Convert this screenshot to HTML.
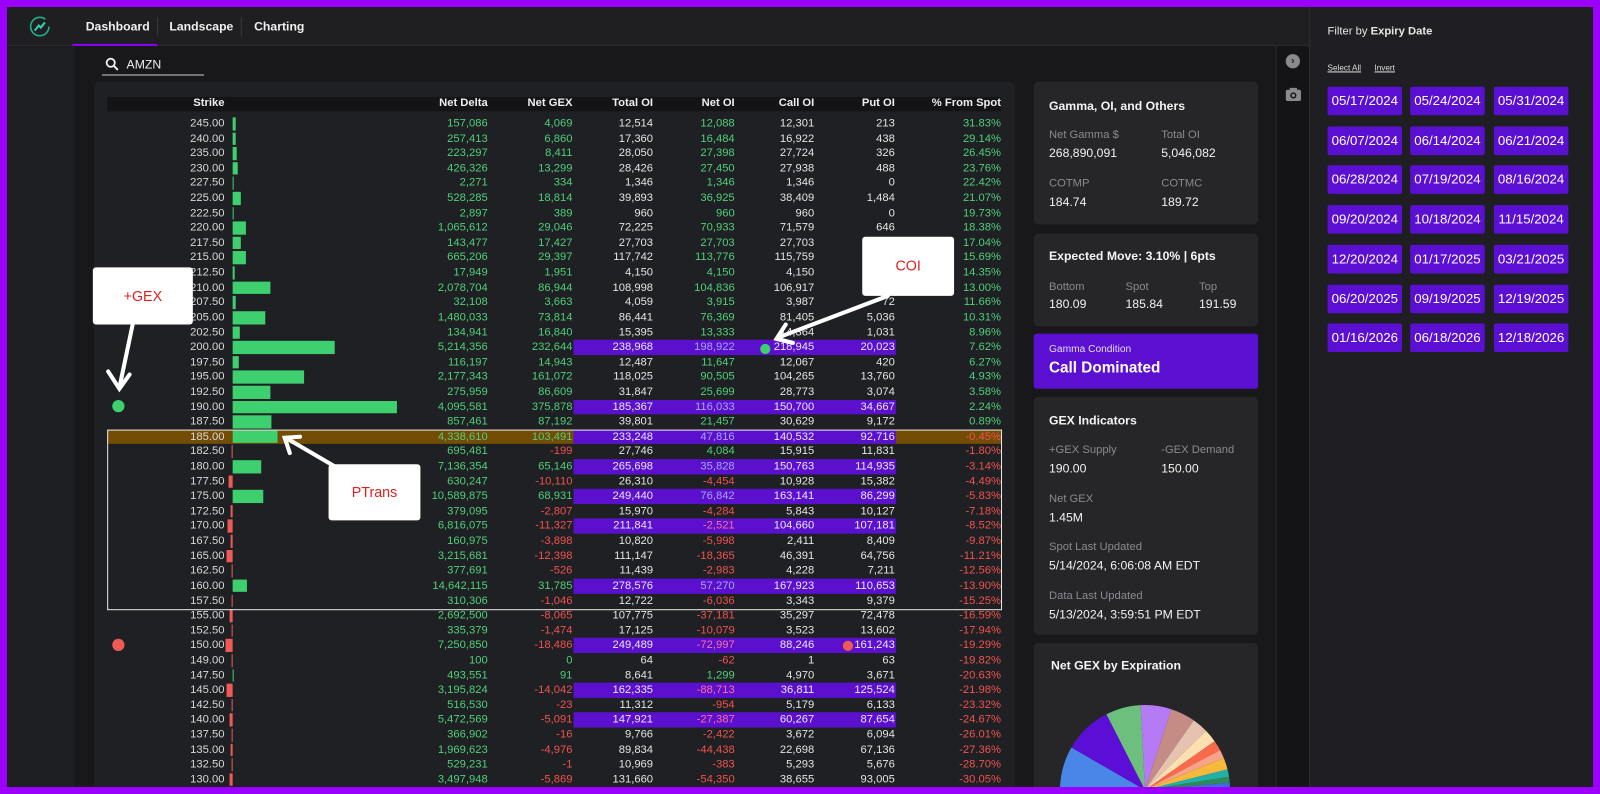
<!DOCTYPE html>
<html style="overflow:hidden;width:1600px;height:794px"><head><meta charset="utf-8"><style>
*{margin:0;padding:0;box-sizing:border-box}
body{width:1600px;height:794px;overflow:hidden;background:#1e1f22;font-family:"Liberation Sans",sans-serif;position:relative}
.a{position:absolute}
#s{position:absolute;left:0;top:0;width:1568px;height:778px;overflow:hidden;transform:scale(1.0204);transform-origin:0 0}
#app{position:absolute;left:7px;top:7px;width:1555px;height:771px;background:#1e1f22;overflow:hidden}
.hdr{left:0;top:0;width:1276px;height:38px;background:#1f1f22;border-bottom:1px solid #2c2c30}
.tab{top:12px;font-size:12px;font-weight:bold;color:#f0f0f0}
.r{position:relative;height:14.61px;font-size:11px;line-height:14.61px}
.r span{position:absolute;top:0;color:#e4e4e4;white-space:nowrap}
.r span:nth-of-type(1){right:1348px;color:#d8d8d8}
.r span:nth-of-type(2){right:1090px}
.r span:nth-of-type(3){right:1007px}
.r span:nth-of-type(4){right:928px}
.r span:nth-of-type(5){right:848px}
.r span:nth-of-type(6){right:770px}
.r span:nth-of-type(7){right:691px}
.r span:nth-of-type(8){right:587px}
.r span.g{color:#4fcf7a}.r span.n{color:#f0524f}
.r em{position:absolute;left:228px;top:1px;height:12.6px;background:#3ecf6e}
.r em.n{left:auto;right:1340px;background:#ee5a55}
.r.p::before{content:"";position:absolute;left:562px;width:316px;top:0;height:14.61px;background:#5a10cc}
.r.p span:nth-of-type(4),.r.p span:nth-of-type(6),.r.p span:nth-of-type(7){color:#ece6ff}
.r.p span:nth-of-type(5).g{color:#a9a4ff}.r.p span:nth-of-type(5).n{color:#ff6f9a}
.r.b::after{content:"";position:absolute;left:105px;width:876px;top:0;height:14.61px;background:rgba(130,85,0,.85);z-index:-1}
.card{position:absolute;left:1006px;width:220px;background:#262629;border-radius:5px}
.ct{position:absolute;left:15px;font-size:12px;font-weight:bold;color:#f4f4f4}
.lb{position:absolute;font-size:11px;color:#8a8a90}
.vl{position:absolute;font-size:12px;color:#f2f2f2}
.dt{position:absolute;width:73px;height:28px;background:#5b0fd3;color:#fff;font-size:13px;text-align:center;line-height:28px;border-radius:2px}
</style></head><body>
<div id="s">
<div id="app">
<div class="a" style="left:66px;top:38px;width:1177px;height:742px;background:#18181b"></div>
<div class="a hdr"></div>
<svg class="a" style="left:21px;top:8px" width="22" height="22" viewBox="0 0 22 22"><circle cx="11" cy="11" r="9" fill="none" stroke="#1fae8c" stroke-width="1.6" stroke-dasharray="48 9"/><path d="M6 15 L10 10 L12 12 L16 7" stroke="#2fd3b0" stroke-width="2" fill="none"/></svg>
<div class="a tab" style="left:77px">Dashboard</div>
<div class="a" style="left:147px;top:10px;width:1px;height:18px;background:#3a3a3e"></div>
<div class="a tab" style="left:159px">Landscape</div>
<div class="a" style="left:229px;top:10px;width:1px;height:18px;background:#3a3a3e"></div>
<div class="a tab" style="left:242px">Charting</div>
<div class="a" style="left:64px;top:36px;width:83px;height:2px;background:#8a00ff"></div>
<svg class="a" style="left:96px;top:49px" width="14" height="14"><circle cx="5.5" cy="5.5" r="4" stroke="#eee" stroke-width="1.8" fill="none"/><path d="M8.5 8.5 L12.5 12.5" stroke="#eee" stroke-width="2"/></svg>
<div class="a" style="left:117px;top:49px;font-size:12px;color:#eee">AMZN</div>
<div class="a" style="left:93px;top:66px;width:100px;height:1px;background:#ccc"></div>
<div class="a" style="left:85px;top:73px;width:903px;height:710px;background:#1f2023;border-radius:6px"></div>
<div class="a" style="left:1243px;top:38px;width:33px;height:742px;background:#141416;border-left:1px solid #2a2a2d"></div>
<div class="a" style="left:1253px;top:46px;width:14px;height:14px;border-radius:50%;background:#8a8a8e;color:#222;font-size:10px;font-weight:bold;text-align:center;line-height:14px">›</div>
<svg class="a" style="left:1253px;top:79px" width="15" height="13"><rect x="0" y="2" width="15" height="11" rx="2" fill="#8a8a8e"/><rect x="4" y="0" width="7" height="3" fill="#8a8a8e"/><circle cx="7.5" cy="7.5" r="3" fill="#141416"/><circle cx="7.5" cy="7.5" r="1.6" fill="#8a8a8e"/></svg>
<div class="a" style="left:1276px;top:0;width:310px;height:780px;background:#1f1f23;border-left:1px solid #2e2e32"></div>
</div>

<div class="a" style="left:105px;top:95px;width:876px;height:14px;background:#141416"></div>
<div class="a" style="left:0;top:95px;width:1568px;font-size:11px;font-weight:bold;color:#eee">
<span class="a" style="right:1348px">Strike</span><span class="a" style="right:1090px">Net Delta</span><span class="a" style="right:1007px">Net GEX</span><span class="a" style="right:928px">Total OI</span><span class="a" style="right:848px">Net OI</span><span class="a" style="right:770px">Call OI</span><span class="a" style="right:691px">Put OI</span><span class="a" style="right:587px">% From Spot</span></div>

<div class="a" style="left:0;top:114px;width:1568px;z-index:1">
<div class="r"><span>245.00</span><em style="width:3px"></em><span class="g">157,086</span><span class="g">4,069</span><span>12,514</span><span class="g">12,088</span><span>12,301</span><span>213</span><span class="g">31.83%</span></div>
<div class="r"><span>240.00</span><em style="width:3px"></em><span class="g">257,413</span><span class="g">6,860</span><span>17,360</span><span class="g">16,484</span><span>16,922</span><span>438</span><span class="g">29.14%</span></div>
<div class="r"><span>235.00</span><em style="width:4px"></em><span class="g">223,297</span><span class="g">8,411</span><span>28,050</span><span class="g">27,398</span><span>27,724</span><span>326</span><span class="g">26.45%</span></div>
<div class="r"><span>230.00</span><em style="width:5px"></em><span class="g">426,326</span><span class="g">13,299</span><span>28,426</span><span class="g">27,450</span><span>27,938</span><span>488</span><span class="g">23.76%</span></div>
<div class="r"><span>227.50</span><em style="width:1px"></em><span class="g">2,271</span><span class="g">334</span><span>1,346</span><span class="g">1,346</span><span>1,346</span><span>0</span><span class="g">22.42%</span></div>
<div class="r"><span>225.00</span><em style="width:8px"></em><span class="g">528,285</span><span class="g">18,814</span><span>39,893</span><span class="g">36,925</span><span>38,409</span><span>1,484</span><span class="g">21.07%</span></div>
<div class="r"><span>222.50</span><em style="width:1px"></em><span class="g">2,897</span><span class="g">389</span><span>960</span><span class="g">960</span><span>960</span><span>0</span><span class="g">19.73%</span></div>
<div class="r"><span>220.00</span><em style="width:13px"></em><span class="g">1,065,612</span><span class="g">29,046</span><span>72,225</span><span class="g">70,933</span><span>71,579</span><span>646</span><span class="g">18.38%</span></div>
<div class="r"><span>217.50</span><em style="width:8px"></em><span class="g">143,477</span><span class="g">17,427</span><span>27,703</span><span class="g">27,703</span><span>27,703</span><span></span><span class="g">17.04%</span></div>
<div class="r"><span>215.00</span><em style="width:13px"></em><span class="g">665,206</span><span class="g">29,397</span><span>117,742</span><span class="g">113,776</span><span>115,759</span><span></span><span class="g">15.69%</span></div>
<div class="r"><span>212.50</span><em style="width:2px"></em><span class="g">17,949</span><span class="g">1,951</span><span>4,150</span><span class="g">4,150</span><span>4,150</span><span></span><span class="g">14.35%</span></div>
<div class="r"><span>210.00</span><em style="width:37px"></em><span class="g">2,078,704</span><span class="g">86,944</span><span>108,998</span><span class="g">104,836</span><span>106,917</span><span></span><span class="g">13.00%</span></div>
<div class="r"><span>207.50</span><em style="width:3px"></em><span class="g">32,108</span><span class="g">3,663</span><span>4,059</span><span class="g">3,915</span><span>3,987</span><span>72</span><span class="g">11.66%</span></div>
<div class="r"><span>205.00</span><em style="width:32px"></em><span class="g">1,480,033</span><span class="g">73,814</span><span>86,441</span><span class="g">76,369</span><span>81,405</span><span>5,036</span><span class="g">10.31%</span></div>
<div class="r"><span>202.50</span><em style="width:7px"></em><span class="g">134,941</span><span class="g">16,840</span><span>15,395</span><span class="g">13,333</span><span>14,364</span><span>1,031</span><span class="g">8.96%</span></div>
<div class="r p"><span>200.00</span><em style="width:100px"></em><span class="g">5,214,356</span><span class="g">232,644</span><span>238,968</span><span class="g">198,922</span><span>218,945</span><span>20,023</span><span class="g">7.62%</span></div>
<div class="r"><span>197.50</span><em style="width:6px"></em><span class="g">116,197</span><span class="g">14,943</span><span>12,487</span><span class="g">11,647</span><span>12,067</span><span>420</span><span class="g">6.27%</span></div>
<div class="r"><span>195.00</span><em style="width:70px"></em><span class="g">2,177,343</span><span class="g">161,072</span><span>118,025</span><span class="g">90,505</span><span>104,265</span><span>13,760</span><span class="g">4.93%</span></div>
<div class="r"><span>192.50</span><em style="width:37px"></em><span class="g">275,959</span><span class="g">86,609</span><span>31,847</span><span class="g">25,699</span><span>28,773</span><span>3,074</span><span class="g">3.58%</span></div>
<div class="r p"><span>190.00</span><em style="width:161px"></em><span class="g">4,095,581</span><span class="g">375,878</span><span>185,367</span><span class="g">116,033</span><span>150,700</span><span>34,667</span><span class="g">2.24%</span></div>
<div class="r"><span>187.50</span><em style="width:38px"></em><span class="g">857,461</span><span class="g">87,192</span><span>39,801</span><span class="g">21,457</span><span>30,629</span><span>9,172</span><span class="g">0.89%</span></div>
<div class="r p b"><span>185.00</span><em style="width:44px"></em><span class="g">4,338,610</span><span class="g">103,491</span><span>233,248</span><span class="g">47,816</span><span>140,532</span><span>92,716</span><span class="n">-0.45%</span></div>
<div class="r"><span>182.50</span><em class="n" style="width:1px"></em><span class="g">695,481</span><span class="n">-199</span><span>27,746</span><span class="g">4,084</span><span>15,915</span><span>11,831</span><span class="n">-1.80%</span></div>
<div class="r p"><span>180.00</span><em style="width:28px"></em><span class="g">7,136,354</span><span class="g">65,146</span><span>265,698</span><span class="g">35,828</span><span>150,763</span><span>114,935</span><span class="n">-3.14%</span></div>
<div class="r"><span>177.50</span><em class="n" style="width:4px"></em><span class="g">630,247</span><span class="n">-10,110</span><span>26,310</span><span class="n">-4,454</span><span>10,928</span><span>15,382</span><span class="n">-4.49%</span></div>
<div class="r p"><span>175.00</span><em style="width:30px"></em><span class="g">10,589,875</span><span class="g">68,931</span><span>249,440</span><span class="g">76,842</span><span>163,141</span><span>86,299</span><span class="n">-5.83%</span></div>
<div class="r"><span>172.50</span><em class="n" style="width:2px"></em><span class="g">379,095</span><span class="n">-2,807</span><span>15,970</span><span class="n">-4,284</span><span>5,843</span><span>10,127</span><span class="n">-7.18%</span></div>
<div class="r p"><span>170.00</span><em class="n" style="width:5px"></em><span class="g">6,816,075</span><span class="n">-11,327</span><span>211,841</span><span class="n">-2,521</span><span>104,660</span><span>107,181</span><span class="n">-8.52%</span></div>
<div class="r"><span>167.50</span><em class="n" style="width:2px"></em><span class="g">160,975</span><span class="n">-3,898</span><span>10,820</span><span class="n">-5,998</span><span>2,411</span><span>8,409</span><span class="n">-9.87%</span></div>
<div class="r"><span>165.00</span><em class="n" style="width:6px"></em><span class="g">3,215,681</span><span class="n">-12,398</span><span>111,147</span><span class="n">-18,365</span><span>46,391</span><span>64,756</span><span class="n">-11.21%</span></div>
<div class="r"><span>162.50</span><em class="n" style="width:1px"></em><span class="g">377,691</span><span class="n">-526</span><span>11,439</span><span class="n">-2,983</span><span>4,228</span><span>7,211</span><span class="n">-12.56%</span></div>
<div class="r p"><span>160.00</span><em style="width:14px"></em><span class="g">14,642,115</span><span class="g">31,785</span><span>278,576</span><span class="g">57,270</span><span>167,923</span><span>110,653</span><span class="n">-13.90%</span></div>
<div class="r"><span>157.50</span><em class="n" style="width:1px"></em><span class="g">310,306</span><span class="n">-1,046</span><span>12,722</span><span class="n">-6,036</span><span>3,343</span><span>9,379</span><span class="n">-15.25%</span></div>
<div class="r"><span>155.00</span><em class="n" style="width:3px"></em><span class="g">2,692,500</span><span class="n">-8,065</span><span>107,775</span><span class="n">-37,181</span><span>35,297</span><span>72,478</span><span class="n">-16.59%</span></div>
<div class="r"><span>152.50</span><em class="n" style="width:1px"></em><span class="g">335,379</span><span class="n">-1,474</span><span>17,125</span><span class="n">-10,079</span><span>3,523</span><span>13,602</span><span class="n">-17.94%</span></div>
<div class="r p"><span>150.00</span><em class="n" style="width:7px"></em><span class="g">7,250,850</span><span class="n">-18,486</span><span>249,489</span><span class="n">-72,997</span><span>88,246</span><span>161,243</span><span class="n">-19.29%</span></div>
<div class="r"><span>149.00</span><em class="n" style="width:1px"></em><span class="g">100</span><span class="g">0</span><span>64</span><span class="n">-62</span><span>1</span><span>63</span><span class="n">-19.82%</span></div>
<div class="r"><span>147.50</span><em style="width:1px"></em><span class="g">493,551</span><span class="g">91</span><span>8,641</span><span class="g">1,299</span><span>4,970</span><span>3,671</span><span class="n">-20.63%</span></div>
<div class="r p"><span>145.00</span><em class="n" style="width:6px"></em><span class="g">3,195,824</span><span class="n">-14,042</span><span>162,335</span><span class="n">-88,713</span><span>36,811</span><span>125,524</span><span class="n">-21.98%</span></div>
<div class="r"><span>142.50</span><em class="n" style="width:1px"></em><span class="g">516,530</span><span class="n">-23</span><span>11,312</span><span class="n">-954</span><span>5,179</span><span>6,133</span><span class="n">-23.32%</span></div>
<div class="r p"><span>140.00</span><em class="n" style="width:3px"></em><span class="g">5,472,569</span><span class="n">-5,091</span><span>147,921</span><span class="n">-27,387</span><span>60,267</span><span>87,654</span><span class="n">-24.67%</span></div>
<div class="r"><span>137.50</span><em class="n" style="width:1px"></em><span class="g">366,902</span><span class="n">-16</span><span>9,766</span><span class="n">-2,422</span><span>3,672</span><span>6,094</span><span class="n">-26.01%</span></div>
<div class="r"><span>135.00</span><em class="n" style="width:2px"></em><span class="g">1,969,623</span><span class="n">-4,976</span><span>89,834</span><span class="n">-44,438</span><span>22,698</span><span>67,136</span><span class="n">-27.36%</span></div>
<div class="r"><span>132.50</span><em class="n" style="width:1px"></em><span class="g">529,231</span><span class="n">-1</span><span>10,969</span><span class="n">-383</span><span>5,293</span><span>5,676</span><span class="n">-28.70%</span></div>
<div class="r"><span>130.00</span><em class="n" style="width:3px"></em><span class="g">3,497,948</span><span class="n">-5,869</span><span>131,660</span><span class="n">-54,350</span><span>38,655</span><span>93,005</span><span class="n">-30.05%</span></div>
</div>

<div class="a" style="left:105px;top:421px;width:877px;height:177px;border:1px solid #e8e8e8;z-index:2"></div>
<div class="a" style="left:91px;top:262px;width:98px;height:56px;background:#fff;border-radius:3px;color:#e02020;font-size:14px;text-align:center;line-height:56px;z-index:3">+GEX</div>
<div class="a" style="left:845px;top:232px;width:90px;height:58px;background:#fff;border-radius:3px;color:#e02020;font-size:14px;text-align:center;line-height:56px;z-index:3">COI</div>
<div class="a" style="left:322px;top:455px;width:90px;height:55px;background:#fff;border-radius:3px;color:#e02020;font-size:14px;text-align:center;line-height:55px;z-index:3">PTrans</div>
<svg class="a" style="left:0;top:0;z-index:3" width="1568" height="778">
<g stroke="#fff" stroke-width="4" fill="none" stroke-linecap="round">
<path d="M130 318 L117 380 M106 364 L117 381 L127 367"/>
<path d="M870 290 L762 331 M770 318 L761 332 L777 336"/>
<path d="M345 467 L280 429 M284 444 L279 429 L294 428"/>
</g>
<circle cx="116" cy="398" r="6" fill="#3ecf6e"/>
<circle cx="750" cy="342" r="5" fill="#3ecf6e"/>
<circle cx="116" cy="632" r="6" fill="#ee5a55"/>
<circle cx="831" cy="633" r="5" fill="#ee5a55"/>
</svg>

<div class="card" style="left:1013px;top:80px;height:140px">
<div class="ct" style="top:17px">Gamma, OI, and Others</div>
<div class="lb" style="left:15px;top:46px">Net Gamma $</div><div class="vl" style="left:15px;top:63px">268,890,091</div>
<div class="lb" style="left:125px;top:46px">Total OI</div><div class="vl" style="left:125px;top:63px">5,046,082</div>
<div class="lb" style="left:15px;top:94px">COTMP</div><div class="vl" style="left:15px;top:111px">184.74</div>
<div class="lb" style="left:125px;top:94px">COTMC</div><div class="vl" style="left:125px;top:111px">189.72</div>
</div>
<div class="card" style="left:1013px;top:229px;height:91px">
<div class="ct" style="top:15px">Expected Move: 3.10% | 6pts</div>
<div class="lb" style="left:15px;top:46px">Bottom</div><div class="vl" style="left:15px;top:62px">180.09</div>
<div class="lb" style="left:90px;top:46px">Spot</div><div class="vl" style="left:90px;top:62px">185.84</div>
<div class="lb" style="left:162px;top:46px">Top</div><div class="vl" style="left:162px;top:62px">191.59</div>
</div>
<div class="card" style="left:1013px;top:327px;height:54px;background:#5b0fd0;border-radius:3px">
<div class="a" style="left:15px;top:10px;font-size:10px;color:#e6dcff">Gamma Condition</div>
<div class="a" style="left:15px;top:25px;font-size:15px;font-weight:bold;color:#fff">Call Dominated</div>
</div>
<div class="card" style="left:1013px;top:389px;height:233px">
<div class="ct" style="top:16px">GEX Indicators</div>
<div class="lb" style="left:15px;top:46px">+GEX Supply</div><div class="vl" style="left:15px;top:63px">190.00</div>
<div class="lb" style="left:125px;top:46px">-GEX Demand</div><div class="vl" style="left:125px;top:63px">150.00</div>
<div class="lb" style="left:15px;top:94px">Net GEX</div><div class="vl" style="left:15px;top:111px">1.45M</div>
<div class="lb" style="left:15px;top:141px">Spot Last Updated</div><div class="vl" style="left:15px;top:158px">5/14/2024, 6:06:08 AM EDT</div>
<div class="lb" style="left:15px;top:189px">Data Last Updated</div><div class="vl" style="left:15px;top:206px">5/13/2024, 3:59:51 PM EDT</div>
</div>
<div class="card" style="left:1013px;top:630px;height:160px;overflow:hidden;border-radius:5px 5px 0 0">
<div class="ct" style="top:15px;left:17px">Net GEX by Expiration</div>
</div>

<div class="a" style="left:1301px;top:25px;font-size:11px;color:#e8e8e8">Filter by <b>Expiry Date</b></div>
<div class="a" style="left:1301px;top:62px;font-size:8px;color:#ddd;text-decoration:underline">Select All</div>
<div class="a" style="left:1347px;top:62px;font-size:8px;color:#ddd;text-decoration:underline">Invert</div>
<div class="dt" style="left:1301px;top:85px">05/17/2024</div><div class="dt" style="left:1382px;top:85px">05/24/2024</div><div class="dt" style="left:1464px;top:85px">05/31/2024</div>
<div class="dt" style="left:1301px;top:124px">06/07/2024</div><div class="dt" style="left:1382px;top:124px">06/14/2024</div><div class="dt" style="left:1464px;top:124px">06/21/2024</div>
<div class="dt" style="left:1301px;top:162px">06/28/2024</div><div class="dt" style="left:1382px;top:162px">07/19/2024</div><div class="dt" style="left:1464px;top:162px">08/16/2024</div>
<div class="dt" style="left:1301px;top:201px">09/20/2024</div><div class="dt" style="left:1382px;top:201px">10/18/2024</div><div class="dt" style="left:1464px;top:201px">11/15/2024</div>
<div class="dt" style="left:1301px;top:240px">12/20/2024</div><div class="dt" style="left:1382px;top:240px">01/17/2025</div><div class="dt" style="left:1464px;top:240px">03/21/2025</div>
<div class="dt" style="left:1301px;top:279px">06/20/2025</div><div class="dt" style="left:1382px;top:279px">09/19/2025</div><div class="dt" style="left:1464px;top:279px">12/19/2025</div>
<div class="dt" style="left:1301px;top:317px">01/16/2026</div><div class="dt" style="left:1382px;top:317px">06/18/2026</div><div class="dt" style="left:1464px;top:317px">12/18/2026</div>
</div>

<svg class="a" style="left:0;top:0" width="1600" height="794">
<path d="M1145 790 L1060 790 A85 85 0 0 1 1071.4 747.5Z" fill="#4a86e8"/>
<path d="M1145 790 L1071.4 747.5 A85 85 0 0 1 1106.4 714.3Z" fill="#5b0fd6"/>
<path d="M1145 790 L1106.4 714.3 A85 85 0 0 1 1140.6 705.1Z" fill="#6cbf7c"/>
<path d="M1145 790 L1140.6 705.1 A85 85 0 0 1 1171.3 709.2Z" fill="#b57bf5"/>
<path d="M1145 790 L1171.3 709.2 A85 85 0 0 1 1193.8 720.4Z" fill="#c58b85"/>
<path d="M1145 790 L1193.8 720.4 A85 85 0 0 1 1206.1 730.9Z" fill="#e6c3b0"/>
<path d="M1145 790 L1206.1 730.9 A85 85 0 0 1 1214.6 741.2Z" fill="#fde0b0"/>
<path d="M1145 790 L1214.6 741.2 A85 85 0 0 1 1220.1 750.1Z" fill="#f86a4a"/>
<path d="M1145 790 L1220.1 750.1 A85 85 0 0 1 1223.8 758.1Z" fill="#f8a38a"/>
<path d="M1145 790 L1223.8 758.1 A85 85 0 0 1 1227.5 769.4Z" fill="#f6b93b"/>
<path d="M1145 790 L1227.5 769.4 A85 85 0 0 1 1229 776.7Z" fill="#20b2aa"/>
<path d="M1145 790 L1229 776.7 A85 85 0 0 1 1229.7 782.6Z" fill="#2e8b57"/>
<path d="M1145 790 L1229.7 782.6 A85 85 0 0 1 1230 790Z" fill="#4169e1"/>
</svg>

<div class="a" style="left:0;top:0;width:1600px;height:7px;background:#9b00ff"></div>
<div class="a" style="left:0;top:787px;width:1600px;height:7px;background:#9b00ff"></div>
<div class="a" style="left:0;top:0;width:7px;height:794px;background:#9b00ff"></div>
<div class="a" style="left:1593px;top:0;width:7px;height:794px;background:#9b00ff"></div>
</body></html>
